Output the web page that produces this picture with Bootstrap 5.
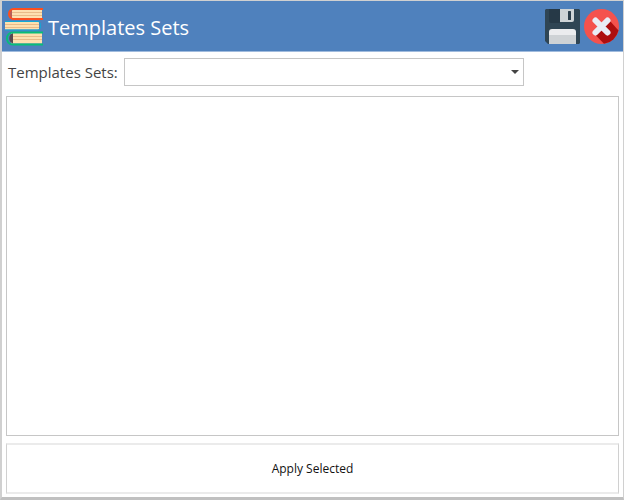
<!DOCTYPE html>
<html lang="en">
<head>
<meta charset="utf-8">
<meta name="viewport" content="width=device-width, initial-scale=1">
<title>Templates Sets</title>
<link href="https://cdn.jsdelivr.net/npm/bootstrap@5.3.0/dist/css/bootstrap.min.css" rel="stylesheet">
<style>
body { font-family: "Open Sans", "Noto Sans", sans-serif; background: #fff; }
.window { border: solid #d0d0d0; border-width: 1px 1px 3px 2px; border-bottom-color: #c0c0c0; }
.titlebar { background: #4f81bd; border-bottom: 1px solid #a0bbdd; height: 51px; padding: 2px 3px 0 2px; }
.titlebar h1 { font-size: 20px; line-height: 30px; margin-left: 4px; padding-top: 2px; }
.tool { width: 36px; height: 36px; }
.tool svg, .books { display: block; }
.picker { padding: 6px 6px 0; gap: 6px; }
.picker label { font-size: 15px; line-height: 28px; color: #444; }
.picker .form-select {
  width: 400px; height: 28px; border-color: #c6c6c6; padding: 0 24px 0 8px; font-size: 14px;
  background-image: url("data:image/svg+xml,%3Csvg xmlns='http://www.w3.org/2000/svg' viewBox='0 0 8 4'%3E%3Cpath d='M0 0h8L4 4z' fill='%23444'/%3E%3C/svg%3E");
  background-size: 8px 4px; background-position: right 4px center;
}
.sets { margin: 10px 4px 0; border: 1px solid #c6c6c6; }
.apply { margin: 7px 4px 3px; height: 51px; font-size: 12px; color: #111; background: #fff; border: solid #d0d0d0; border-width: 2px 1px; border-top-color: #ebebeb; border-bottom-color: #ebebeb; }
.apply:hover { background: #f4f7fb; }
</style>
<script src="https://cdn.jsdelivr.net/npm/bootstrap@5.3.0/dist/js/bootstrap.bundle.min.js"></script>
</head>
<body>
<main class="window d-flex flex-column vh-100">
  <header class="titlebar d-flex align-items-center flex-shrink-0">
    <svg class="books" width="40" height="40" viewBox="0 1 40 40" aria-hidden="true">
      <path d="M7 3.500h31v9H7z" fill="#fde0b0"/>
      <path d="M8 6.500h30M8 9.500h30" stroke="#e9bb88"/>
      <path d="M7 3.500v9" stroke="#b95e57" stroke-width="2"/>
      <path d="M39 3H9.500C3.500 3 3.500 13 9.500 13H39" fill="none" stroke="#fc4f1f" stroke-width="2"/>
      <path d="M1 16h34v7.500H1z" fill="#fde0b0"/>
      <path d="M1 18.500h34M1 21.500h34" stroke="#e9bb88"/>
      <path d="M1 15.500h33c3.500 0 3.500 8.500 0 8.500H1" fill="none" stroke="#12a9d5"/>
      <path d="M7 27h31v10.500H7z" fill="#fde0b0"/>
      <path d="M9 30.500h29M9 33.500h29" stroke="#e9bb88"/>
      <path d="M9 27v10.500c-5-1-5-9.500 0-10.500z" fill="#594a51"/>
      <path d="M39 26.500H9c-8 0-8 12 0 12h30" fill="none" stroke="#08bd78" stroke-width="2"/>
    </svg>
    <h1 class="text-white fw-normal mb-0 me-auto">Templates Sets</h1>
    <div class="d-flex gap-1">
      <button class="tool btn p-0 border-0 rounded-0" type="button" aria-label="Save">
        <svg width="36" height="36" viewBox="0 0 36 36" aria-hidden="true">
          <path d="M2 0h33l1 1v33l-1 1H4l-3-3V1z" fill="#2f4554"/>
          <path d="M5 0h11v14H7q-2 0-2-2z" fill="#263947"/>
          <path d="M16 0h14v11q0 2-2 2H16z" fill="#ced3d6"/>
          <rect x="24" y="2" width="3" height="9" rx=".5" fill="#2b3d4a"/>
          <path d="M8 20h21q3 0 3 3v12H5V23q0-3 3-3z" fill="#ebecee"/>
          <path d="M5 26h27v9H5z" fill="#ced2d5"/>
        </svg>
      </button>
      <button class="tool btn p-0 border-0 rounded-0" type="button" aria-label="Close">
        <svg width="36" height="36" viewBox="0 0 36 36" aria-hidden="true">
          <circle cx="17.500" cy="17.500" r="17.500" fill="#f4524d"/>
          <path d="M26 12l8.500 9.500A17.500 17.500 0 0 1 20 34.800L9.500 24z" fill="#ad0e0e"/>
          <path d="M11.500 11.500l12 12M23.500 11.500l-12 12" stroke="#e9edf5" stroke-width="6" stroke-linecap="round"/>
        </svg>
      </button>
    </div>
  </header>
  <div class="picker d-flex align-items-center">
    <label for="set" class="text-nowrap">Templates Sets:</label>
    <select id="set" class="form-select rounded-0"><option selected></option></select>
  </div>
  <section class="sets flex-grow-1" aria-label="Templates in set"></section>
  <button class="apply btn rounded-0" type="button">Apply Selected</button>
</main>
</body>
</html>
